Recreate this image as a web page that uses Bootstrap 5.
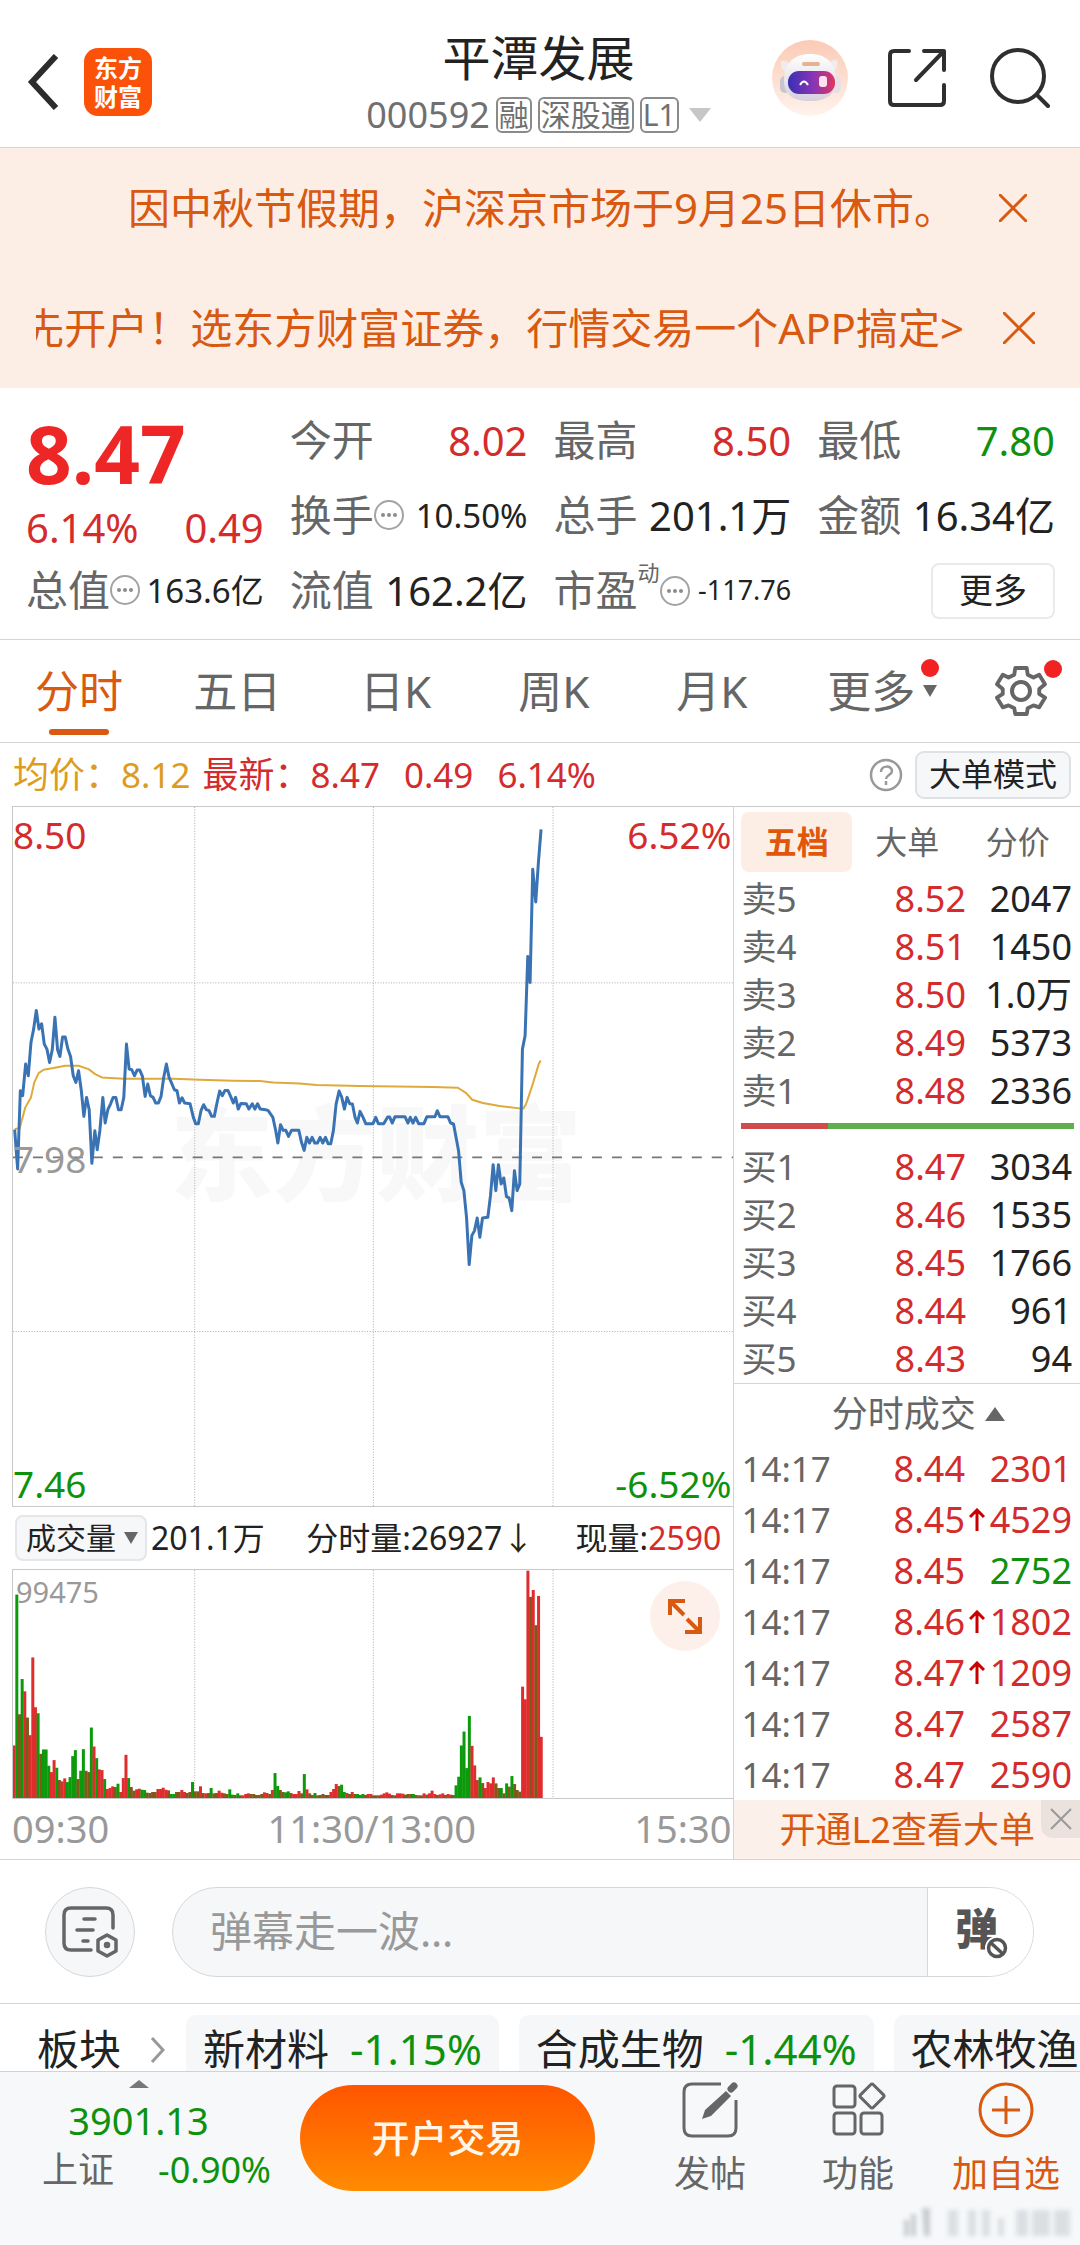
<!DOCTYPE html>
<html lang="zh-CN">
<head>
<meta charset="utf-8">
<meta name="viewport" content="width=device-width, initial-scale=1">
<title>平潭发展 000592</title>
<link href="https://cdn.jsdelivr.net/npm/bootstrap@5.3.0/dist/css/bootstrap.min.css" rel="stylesheet">
<style>
  :root { --up:#d42c2c; --down:#0e920e; --accent:#d8590f; --ink:#222; --sub:#666; --mute:#999; --rule:#d3d6d9; --soft:#f6f7f9; --peach:#fdeee5; }
  body { font-family:"Noto Sans","Noto Sans CJK SC",sans-serif; color:var(--ink); background:#fff; line-height:1.2; font-size:36px; }
  svg { display:block; flex:none; }
  button, .plain-link { border:0; background:none; padding:0; color:inherit; text-decoration:none; }
  .up { color:var(--up); } .down { color:var(--down); } .accent { color:var(--accent); } .sub { color:var(--sub); } .mute { color:var(--mute); }
  .rule-b { border-bottom:1px solid var(--rule); }
  .tri { width:0; height:0; border:7px solid transparent; border-bottom-width:0; border-top:12px solid var(--sub); display:inline-block; flex:none; }
  .tri-up { width:0; height:0; border:10px solid transparent; border-top-width:0; border-bottom:14px solid var(--sub); display:inline-block; }

  .app-head { height:148px; padding:0 30px 0 27px; }
  .head-side { flex:1 1 0; }
  .brand-tile { width:68px; height:68px; margin-left:25px; border-radius:14px; background:#fb5109; color:#fff; font-size:24px; line-height:29px; font-weight:700; }
  .stock-name { font-size:48px; line-height:58px; }
  .stock-code { font-size:36px; line-height:40px; color:#707070; margin-top:8px; gap:6px; }
  .tag { font-size:30px; line-height:32px; border:2px solid #8a8a8a; border-radius:6px; padding:0 1px; }

  .notices { background:var(--peach); font-size:42px; color:var(--accent); }
  .notice-row { height:120px; white-space:nowrap; }
  .notice-clip { flex:none; width:928px; overflow:hidden; }

  .quote { padding:15px 25px 11px 26px; display:grid; grid-template-columns:repeat(4,minmax(0,1fr)); column-gap:26px; }
  .quote-rest { grid-column:span 3; display:grid; grid-template-columns:repeat(3,minmax(0,1fr)); grid-auto-rows:75px; column-gap:26px; }
  .cell { display:flex; align-items:center; justify-content:space-between; height:75px; white-space:nowrap; color:var(--sub); font-size:42px; }
  .cell .v { font-size:40px; color:var(--ink); }
  .cell .v.up { color:var(--up); } .cell .v.down { color:var(--down); }
  .cell .v-mid { font-size:33px; } .cell .v-min { font-size:27px; }
  .last-price { font-size:80px; font-weight:700; line-height:100px; color:#ee2626; }
  .change { font-size:40px; line-height:50px; }
  .dyn { font-size:22px; align-self:flex-start; margin-top:6px; }
  .more-btn { width:124px; height:56px; font-size:34px; color:var(--ink); border:2px solid #e8eaec; border-radius:8px; }

  .periods { height:103px; font-size:44px; color:var(--sub); }
  .period { flex:4 1 0; position:relative; height:100%; }
  .period.on { color:var(--accent); }
  .period.on::after { content:""; position:absolute; bottom:7px; left:50%; width:60px; margin-left:-30px; height:6px; border-radius:3px; background:var(--accent); }
  .period-set { flex:3 1 0; }
  .period-more { padding-left:12px; }
  .dot { position:absolute; width:18px; height:18px; border-radius:50%; background:#f02222; }
  .dot-tri { top:-6px; right:-2px; }
  .dot-gear { top:-5px; right:-15px; }

  .readout { height:63px; padding:0 9px 0 13px; }
  .readout .n { font-size:35px; }
  .big-mode { font-size:32px; width:156px; height:48px; background:var(--soft); border:2px solid #dfe1e5; border-radius:9px; }

  .left-pane { flex:0 0 68%; padding-left:12px; border-right:1px solid var(--rule); }
  .right-pane { flex:1 1 0; min-width:0; border-top:1px solid #c9c9c9; }
  .plot { position:relative; border:1px solid #c9c9c9; border-right:0; height:701px; }
  .plot svg.canvas { width:100%; height:100%; position:relative; }
  .plot-vol { height:230px; }
  .tag-at { position:absolute; font-size:37px; line-height:44px; }
  .tag-top { top:6px; }
  .tag-right { right:2px; }
  .tag-mid { top:330px; }
  .tag-vol { left:3px; top:0; font-size:29px; }
  .wm { position:absolute; left:157px; top:276px; font-size:103px; line-height:140px; font-weight:900; color:#f8f8f8; }
  .vol-bar { height:62px; font-size:32px; white-space:nowrap; padding:0 12px 0 3px; }
  .pick { position:relative; }
  .pick select { appearance:none; width:132px; height:46px; font-size:30px; line-height:40px; padding:0 0 0 9px; background:var(--soft); border:2px solid #e4e6e9; border-radius:8px; color:var(--ink); }
  .pick .tri { position:absolute; right:9px; top:17px; pointer-events:none; }
  .expand { position:absolute; right:13px; top:11px; width:70px; height:70px; border-radius:50%; background:#fdf0ea; color:var(--accent); }
  .axis { font-size:38px; height:59px; padding-right:2px; }

  .book-tabs { padding:5px 7px 3px; font-size:32px; color:var(--sub); }
  .book-tabs button { flex:1 1 0; height:60px; border-radius:8px; }
  .book-tabs .on { background:var(--peach); color:#e0570b; font-weight:700; }
  .ladder { width:100%; font-size:36px; table-layout:fixed; }
  .ladder td { padding:0; height:48px; line-height:44px; text-align:right; }
  .ladder td:first-child { text-align:left; color:var(--sub); font-size:35px; }
  .ladder .qty { width:106px; }
  .ticks td { height:51px; }
  .ticks .arr { width:24px; } .ticks .qty { width:83px; }
  .ticks svg { margin:0 4px 0 auto; }
  .pane-in { padding:0 8px 0 7px; }
  .balance { height:6px; margin:8px 6px 14px 7px; border-radius:0; background:#5fb04c; }
  .balance div { background:#d04c4c; }
  .tape-head { height:60px; border-top:1px solid var(--rule); font-size:36px; gap:9px; padding-left:22px; }
  .promo { position:relative; height:59px; background:#fcf0ea; font-size:36px; }
  .promo-x { position:absolute; right:0; top:0; width:39px; height:38px; background:#ece2dd; border-bottom-left-radius:12px; }

  .danmu { height:145px; padding:0 46px 0 45px; gap:37px; border-top:1px solid var(--rule); }
  .round-btn { width:90px; height:90px; border-radius:50%; background:var(--soft); border:1px solid #d5d8db; flex:none; }
  .say { height:90px; border:1px solid #d5d8db; border-radius:45px; background:var(--soft); overflow:hidden; }
  .say input { border:0; background:none; font-size:42px; padding:0 0 0 37px; min-width:0; outline:0; }
  .say input::placeholder { color:var(--mute); opacity:1; }
  .say-tog { width:106px; background:#fff; border-left:1px solid #d5d8db; color:#555; font-size:43px; font-weight:900; position:relative; padding:0 8px 6px 0; }
  .say-tog svg { position:absolute; left:57px; top:48px; }

  .sectors { height:67px; overflow:hidden; padding:11px 0 0 37px; font-size:42px; line-height:68px; white-space:nowrap; }
  .sector { background:var(--soft); border-radius:10px; height:80px; padding:0 17px; margin-right:20px; gap:21px; flex:none; }
  .chev { margin:22px 21px 0 29px; }

  .dock { background:#f6f8fa; border-top:1px solid #cfd2d6; min-height:177px; padding:8px 0 40px 42px; position:relative; }
  .index-box { width:229px; }
  .index-main { padding-right:36px; }
  .index-num { font-size:38px; line-height:50px; margin-top:7px; }
  .open-btn { flex:0 0 295px; height:106px; border-radius:53px; background:linear-gradient(#ff5500,#ff8c00); color:#fff8ea; font-size:38px; font-weight:500; margin:5px 41px 0 29px; }
  .act { flex:1 1 0; font-size:36px; color:var(--sub); line-height:50px; padding-top:2px; gap:11px; }
  .act-add { color:var(--accent); }
  .stamp { position:absolute; right:4px; bottom:8px; filter:blur(2px); }
</style>
</head>
<body>
<div class="d-flex flex-column">

<header class="app-head d-flex align-items-center rule-b">
  <div class="head-side d-flex align-items-center pt-3">
    <button type="button" aria-label="返回"><svg width="32" height="56" viewBox="0 0 32 56" fill="none" stroke="#2c2c2c" stroke-width="6"><path d="M29 2 5 28l24 26"/></svg></button>
    <div class="brand-tile d-flex flex-column justify-content-center align-items-center"><span>东方</span><span>财富</span></div>
  </div>
  <div class="text-center pt-3">
    <h1 class="stock-name fw-normal mb-0">平潭发展</h1>
    <div class="stock-code d-flex align-items-center"><span>000592</span><span class="tag">融</span><span class="tag">深股通</span><span class="tag">L1</span>
      <svg class="ms-1" width="22" height="14"><path d="M0 0h22L11 14z" fill="#c6c6c6"/></svg></div>
  </div>
  <div class="head-side d-flex align-items-center justify-content-end pt-2" style="gap:40px">
    <button type="button" aria-label="智能助手"><svg width="76" height="76" viewBox="0 0 76 76">
      <defs><linearGradient id="halo" x2="0" y2="1"><stop stop-color="#fbcab5"/><stop offset="1" stop-color="#fff3ec"/></linearGradient>
      <linearGradient id="visor"><stop stop-color="#3a2fb4"/><stop offset=".55" stop-color="#8a35b5"/><stop offset="1" stop-color="#e03560"/></linearGradient>
      <linearGradient id="shell" x2="0" y2="1"><stop stop-color="#fff"/><stop offset="1" stop-color="#d5d0dc"/></linearGradient></defs>
      <circle cx="38" cy="38" r="38" fill="url(#halo)"/>
      <path d="M9 21q7-1 10 5l-6 6q-5-4-4-11zM65 20q-7 0-10 5l7 6q5-4 3-11z" fill="#f1ebee"/>
      <rect x="8" y="36" width="10" height="17" rx="5" fill="#c9c5d0"/><rect x="59" y="36" width="10" height="17" rx="5" fill="#e7dfe6"/>
      <path d="M38 14c17 0 25 10 26 24 1 15-8 23-26 23S11 54 12 38c1-14 9-24 26-24z" fill="url(#shell)"/>
      <rect x="30" y="22" width="18" height="4" rx="2" fill="#e6b48c"/>
      <rect x="16" y="31" width="47" height="23" rx="11" fill="url(#visor)"/>
      <path d="M28 45q4-7 8 0" fill="none" stroke="#fff" stroke-width="2"/><rect x="47" y="36" width="8" height="11" rx="3" fill="#ffe3f0"/></svg></button>
    <button type="button" aria-label="分享"><svg width="58" height="58" viewBox="0 0 58 58" fill="none" stroke="#2f2f2f" stroke-width="4" stroke-linecap="round" stroke-linejoin="round"><path d="M21 2H6q-4 0-4 4v46q0 4 4 4h46q4 0 4-4V36M36 2h20v19M55 3 28 31"/></svg></button>
    <button type="button" aria-label="搜索" class="ms-1"><svg width="60" height="60" viewBox="0 0 60 60" fill="none" stroke="#2f2f2f" stroke-width="4" stroke-linecap="round"><circle cx="28" cy="28" r="26"/><path d="M47 47l11 11"/></svg></button>
  </div>
</header>

<section class="notices">
  <div class="notice-row d-flex align-items-center justify-content-between" style="padding:0 53px 0 128px">
    <span>因中秋节假期，沪深京市场于9月25日休市。</span>
    <button type="button" aria-label="关闭公告"><svg width="28" height="28" viewBox="0 0 28 28" stroke="currentColor" stroke-width="3"><path d="M0 0l28 28M28 0 0 28"/></svg></button>
  </div>
  <div class="notice-row d-flex align-items-center justify-content-between" style="padding:0 45px 0 36px">
    <a href="#" class="plain-link notice-clip d-flex justify-content-end"><span>先开户！选东方财富证券，行情交易一个APP搞定&gt;</span></a>
    <button type="button" aria-label="关闭广告"><svg width="32" height="32" viewBox="0 0 32 32" stroke="currentColor" stroke-width="3"><path d="M0 0l32 32M32 0 0 32"/></svg></button>
  </div>
</section>

<section class="quote rule-b">
  <div>
    <div class="last-price">8.47</div>
    <div class="change up d-flex justify-content-between"><span>6.14%</span><span>0.49</span></div>
    <div class="cell"><span class="d-flex align-items-center">总值<svg width="30" height="30"><use href="#dots"/></svg></span><span class="v v-mid">163.6亿</span></div>
  </div>
  <div class="quote-rest">
    <div class="cell"><span>今开</span><span class="v up">8.02</span></div>
    <div class="cell"><span>最高</span><span class="v up">8.50</span></div>
    <div class="cell"><span>最低</span><span class="v down">7.80</span></div>
    <div class="cell"><span class="d-flex align-items-center">换手<svg width="30" height="30"><use href="#dots"/></svg></span><span class="v v-mid">10.50%</span></div>
    <div class="cell"><span>总手</span><span class="v">201.1万</span></div>
    <div class="cell"><span>金额</span><span class="v">16.34亿</span></div>
    <div class="cell"><span>流值</span><span class="v">162.2亿</span></div>
    <div class="cell"><span>市盈</span><span class="dyn">动</span><svg width="30" height="30"><use href="#dots"/></svg><span class="v v-min ms-auto">-117.76</span></div>
    <div class="cell justify-content-end"><button type="button" class="more-btn">更多</button></div>
  </div>
</section>
<svg width="0" height="0" class="position-absolute"><symbol id="dots" viewBox="0 0 30 30"><circle cx="15" cy="15" r="14" fill="none" stroke="#a3a3a3" stroke-width="2"/><g fill="#8c8c8c"><circle cx="9" cy="15" r="2"/><circle cx="15" cy="15" r="2"/><circle cx="21" cy="15" r="2"/></g></symbol></svg>

<nav class="periods d-flex align-items-center rule-b">
  <button type="button" class="period on">分时</button>
  <button type="button" class="period">五日</button>
  <button type="button" class="period">日K</button>
  <button type="button" class="period">周K</button>
  <button type="button" class="period">月K</button>
  <button type="button" class="period period-more"><span class="d-inline-flex align-items-center position-relative">更多<span class="tri ms-2"></span><span class="dot dot-tri"></span></span></button>
  <button type="button" class="period-set d-flex justify-content-center" aria-label="设置"><span class="position-relative"><svg width="52" height="52" viewBox="-26 -26 52 52" fill="none" stroke="#666" stroke-width="4" stroke-linejoin="round"><path d="M-6-24H6L7-17 13-14 19-17 25-7 19-2V3L25 7 19 17 13 15 7 18 6 24H-6L-7 18-13 15-19 17-25 7-19 3V-2L-25-7-19-17-13-14-7-17z" transform="scale(.96)"/><circle r="9"/></svg><span class="dot dot-gear"></span></span></button>
</nav>

<section class="readout d-flex align-items-center">
  <span style="color:#dd9c1c">均价：<span class="n">8.12</span></span>
  <span class="up d-flex align-items-center ms-2 ps-1" style="gap:24px"><span>最新：<span class="n">8.47</span></span><span class="n">0.49</span><span class="n">6.14%</span></span>
  <svg class="ms-auto me-2" width="34" height="34" viewBox="0 0 34 34" fill="none" stroke="#999" stroke-width="2.500"><circle cx="17" cy="17" r="15"/><path d="M12 14c0-7 11-7 11-1 0 4-6 4-6 8M17 23v4"/></svg>
  <button type="button" class="big-mode ms-1">大单模式</button>
</section>

<main class="d-flex">
  <div class="left-pane">
    <div class="plot">
      <div class="wm">东方财富</div>
      <svg class="canvas" viewBox="38 13 2165 2099" preserveAspectRatio="none" fill="none">
        <g stroke="#adadad" stroke-width="3" stroke-dasharray="3 5"><path d="M584 13V2112M1121 13V2112M1661 13V2112M38 541H2203M38 1588H2203"/></g>
        <path d="M38 1065H2203" stroke="#777" stroke-width="5" stroke-dasharray="30 30"/>
        <polyline stroke="#dfa93c" stroke-width="6" stroke-linejoin="round" points="43,980 58,978 75,915 92,885 102,840 115,812 130,802 160,797 195,790 235,790 265,800 285,815 305,825 370,829 520,829 600,832 700,835 780,836 820,840 900,843 950,848 1080,851 1190,852 1300,854 1375,856 1400,872 1418,892 1450,902 1500,911 1560,918 1572,918 1580,905 1600,845 1618,785 1624,774"/>
        <polyline stroke="#3a73b4" stroke-width="9" stroke-linejoin="round" points="43,982 52,1100 60,865 67,880 76,785 84,820 92,720 100,680 108,624 116,680 124,664 132,725 140,740 148,780 156,742 164,644 172,742 179,762 187,704 195,704 203,740 211,762 219,820 227,840 235,805 243,862 251,942 259,885 267,922 275,1083 284,985 291,1042 299,985 308,885 315,962 323,922 331,905 339,885 347,885 355,922 363,922 371,885 379,725 387,800 395,802 403,820 411,803 419,803 427,822 435,882 443,845 451,880 459,885 467,902 475,902 483,882 491,825 499,785 507,825 515,843 523,862 531,865 538,902 546,886 554,902 570,904 580,945 587,964 595,964 603,925 611,907 619,922 627,925 635,942 643,942 651,902 659,866 667,880 675,864 684,864 692,882 700,902 707,885 715,920 723,903 739,904 747,920 757,904 765,920 773,904 781,920 797,922 805,925 819,945 827,982 834,1022 842,967 850,984 858,984 866,1002 875,984 897,984 905,1020 913,1044 921,1005 929,1022 937,1005 945,1022 953,1022 961,1005 969,1022 977,1005 985,1024 993,1024 1001,984 1009,905 1018,866 1026,885 1034,920 1042,885 1050,904 1058,905 1066,945 1073,962 1081,927 1090,945 1098,964 1120,964 1128,945 1136,964 1152,964 1164,944 1170,944 1178,962 1186,943 1216,943 1225,962 1232,945 1240,962 1248,945 1257,964 1273,964 1282,943 1306,943 1313,925 1321,943 1345,943 1353,962 1362,965 1377,1045 1385,1140 1393,1165 1401,1245 1409,1387 1417,1300 1425,1285 1433,1247 1441,1305 1449,1247 1465,1245 1473,1180 1481,1087 1489,1165 1497,1087 1505,1145 1513,1127 1521,1183 1529,1187 1537,1225 1545,1105 1553,1165 1561,1145 1569,740 1577,700 1585,462 1592,540 1600,200 1609,298 1617,180 1625,80"/>
      </svg>
      <span class="tag-at tag-top up start-0">8.50</span>
      <span class="tag-at tag-top tag-right up">6.52%</span>
      <span class="tag-at tag-mid mute start-0">7.98</span>
      <span class="tag-at down start-0 bottom-0">7.46</span>
      <span class="tag-at tag-right down bottom-0">-6.52%</span>
    </div>
    <div class="vol-bar d-flex align-items-center">
      <label class="pick"><select aria-label="指标"><option>成交量</option></select><span class="tri"></span></label>
      <span class="ms-1">201.1万</span>
      <span class="mx-auto">分时量:26927↓</span>
      <span>现量:<span class="up">2590</span></span>
    </div>
    <div class="plot plot-vol">
      <svg class="canvas" viewBox="38 262 2165 686" preserveAspectRatio="none">
        <path d="M584 262V948M1121 262V948M1661 262V948" stroke="#adadad" stroke-width="3" stroke-dasharray="3 5"/>
        <g id="bars"></g>
      </svg>
      <span class="tag-at tag-vol mute">99475</span>
      <button type="button" class="expand d-flex justify-content-center align-items-center" aria-label="放大"><svg width="36" height="36" viewBox="0 0 36 36" fill="none" stroke="currentColor" stroke-width="4"><path d="M3 17V3h15M3 3l14 14M33 19v15H18M33 34 20 21"/></svg></button>
    </div>
    <div class="axis mute d-flex justify-content-between align-items-center"><span>09:30</span><span>11:30/13:00</span><span>15:30</span></div>
  </div>

  <div class="right-pane">
    <div class="book-tabs d-flex"><button type="button" class="on">五档</button><button type="button">大单</button><button type="button">分价</button></div>
    <div class="pane-in"><table class="ladder"><tbody>
      <tr><td>卖5</td><td class="up">8.52</td><td class="qty">2047</td></tr>
      <tr><td>卖4</td><td class="up">8.51</td><td class="qty">1450</td></tr>
      <tr><td>卖3</td><td class="up">8.50</td><td class="qty">1.0万</td></tr>
      <tr><td>卖2</td><td class="up">8.49</td><td class="qty">5373</td></tr>
      <tr><td>卖1</td><td class="up">8.48</td><td class="qty">2336</td></tr>
    </tbody></table></div>
    <div class="balance progress"><div style="width:26%"></div></div>
    <div class="pane-in"><table class="ladder"><tbody>
      <tr><td>买1</td><td class="up">8.47</td><td class="qty">3034</td></tr>
      <tr><td>买2</td><td class="up">8.46</td><td class="qty">1535</td></tr>
      <tr><td>买3</td><td class="up">8.45</td><td class="qty">1766</td></tr>
      <tr><td>买4</td><td class="up">8.44</td><td class="qty">961</td></tr>
      <tr><td>买5</td><td class="up">8.43</td><td class="qty">94</td></tr>
    </tbody></table></div>
    <div class="tape-head sub d-flex align-items-center justify-content-center"><span>分时成交</span><span class="tri-up"></span></div>
    <div class="pane-in"><table class="ladder ticks"><tbody id="tape"></tbody></table></div>
    <div class="promo accent d-flex align-items-center justify-content-center"><a href="#" class="plain-link">开通L2查看大单</a>
      <button type="button" class="promo-x d-flex align-items-center justify-content-center" aria-label="关闭"><svg width="22" height="22" viewBox="0 0 22 22" stroke="#999" stroke-width="2"><path d="M1 1l20 20M21 1 1 21"/></svg></button></div>
  </div>
</main>

<section class="danmu d-flex align-items-center rule-b">
  <button type="button" class="round-btn d-flex align-items-center justify-content-center" aria-label="弹幕设置"><svg width="56" height="52" viewBox="0 0 56 52" fill="none" stroke="#666" stroke-width="3.500" stroke-linecap="round"><path d="M51 22V9q0-7-7-7H9Q2 2 2 9v28q0 7 7 7h20M22 13h11M15 24h16M21 35h5"/><path d="M45 29l9 5v11l-9 5-9-5V34z" stroke-linejoin="round"/><circle cx="45" cy="39" r="1.500"/></svg></button>
  <div class="say d-flex flex-fill"><input class="flex-fill" type="text" placeholder="弹幕走一波…" aria-label="弹幕"><button type="button" class="say-tog" aria-label="关闭弹幕">弹<svg width="24" height="24" viewBox="0 0 24 24"><circle cx="12" cy="12" r="8.500" fill="#fff" stroke="#fff" stroke-width="7"/><circle cx="12" cy="12" r="8.500" fill="none" stroke="#555" stroke-width="3.500"/><path d="M6 7l12 11" stroke="#555" stroke-width="3.500"/></svg></button></div>
</section>

<section class="sectors d-flex">
  <span>板块</span>
  <svg class="chev" width="15" height="26" viewBox="0 0 15 26" fill="none" stroke="#999" stroke-width="3"><path d="M2 1l11 12L2 25"/></svg>
  <a href="#" class="plain-link sector d-flex"><span>新材料</span><span class="down">-1.15%</span></a>
  <a href="#" class="plain-link sector d-flex"><span>合成生物</span><span class="down">-1.44%</span></a>
  <a href="#" class="plain-link sector d-flex"><span>农林牧渔</span></a>
</section>

<footer class="dock d-flex align-items-start">
  <div class="index-box">
    <div class="index-main text-center">
      <svg class="mx-auto" width="20" height="8"><path d="M0 8h20L10 0z" fill="#777"/></svg>
      <div class="down index-num">3901.13</div>
    </div>
    <div class="d-flex justify-content-between align-items-center" style="line-height:50px"><span class="sub">上证</span><span class="down">-0.90%</span></div>
  </div>
  <button type="button" class="open-btn">开户交易</button>
  <button type="button" class="act d-flex flex-column align-items-center"><svg width="56" height="56" viewBox="0 0 56 56" fill="none" stroke="#666" stroke-width="3"><path d="M39 2H10Q2 2 2 10v36q0 8 8 8h36q8 0 8-8V18"/><path d="M20 37l3-9L44 9l5 5-20 20z" fill="#666" stroke="none"/><path d="M49 7l3-3" stroke-width="7" stroke-linecap="round"/></svg><span>发帖</span></button>
  <button type="button" class="act d-flex flex-column align-items-center"><svg width="56" height="56" viewBox="0 0 56 56" fill="none" stroke="#666" stroke-width="3" stroke-linejoin="round"><rect x="4" y="4" width="21" height="21" rx="3"/><rect x="4" y="31" width="21" height="21" rx="3"/><rect x="31" y="31" width="21" height="21" rx="3"/><rect x="33" y="5" width="18" height="18" rx="2" transform="rotate(45 42 14)"/></svg><span>功能</span></button>
  <button type="button" class="act act-add d-flex flex-column align-items-center"><svg width="56" height="56" viewBox="0 0 56 56" fill="none" stroke="currentColor" stroke-width="3"><circle cx="28" cy="28" r="26"/><path d="M28 14v28M14 28h28"/></svg><span>加自选</span></button>
  <svg class="stamp" width="176" height="36" viewBox="0 0 176 36" fill="#c9ccd1"><path d="M4 16h5v16H4zM11 10h5v22h-5zM22 4h8v28h-6z"/><g fill="#dcdfe2"><path d="M48 6h10v26H48zM68 6h8v26h-8zM82 6h8v26h-8zM98 14h6v18h-6zM116 6h12v26h-12zM132 6h18v26h-18zM154 6h16v26h-16z"/></g></svg>
</footer>
</div>

<script src="https://cdn.jsdelivr.net/npm/bootstrap@5.3.0/dist/js/bootstrap.bundle.min.js"></script>
<script>
  // minute volume: colour code (r rise, g fall, b mixed) followed by bar height
  const vol = "r158 g612 b252 g358 r321 b242 r189 r423 r273 g255 b133 g146 g146 g97 r78 r114 g91 b54 r50 r59 g48 g63 g126 g144 b57 g82 g147 b82 b78 g212 r155 g120 r86 r84 g57 r27 r30 r35 b33 g43 r18 r60 r130 g60 b33 b22 r26 r28 g25 g24 b16 b15 b18 b18 r27 r27 r31 r25 b23 g12 g12 b18 b18 r24 r18 b15 b18 g48 b20 b20 r35 b15 r14 b15 g30 b14 b15 r22 r16 b14 b12 g26 g10 b9 g14 b8 r8 r12 r14 b12 b12 b9 b9 b12 r17 r15 b12 r24 g75 g36 b24 b18 g17 g20 b15 r12 r12 r21 b14 g72 r26 b14 b9 g15 b8 b9 b12 b9 b9 r18 r27 r42 b36 g40 g18 r15 b12 r18 b12 g12 g9 g12 b9 r12 r12 b8 b8 b8 r10 r14 r17 r13 b9 b8 r14 r14 r13 b10 b12 b12 g12 b9 b8 b8 r14 b10 r14 r22 r12 b9 r11 r14 b9 r12 b10 b9 g38 g64 g158 g200 g90 g247 r157 r98 r54 g62 b45 r30 r48 r44 r62 b44 b30 g30 b14 g44 b34 g66 b42 b24 b19 r335 r297 r684 b605 r626 b520 r608 r184".split(" ");
  const fill = { r:"#e02c2c", g:"#0c9a0c", b:"#80591a" };
  document.getElementById("bars").innerHTML = vol.map((s, i) => {
    const h = +s.slice(1);
    return `<rect x="${37 + i * 8}" y="${948 - h}" width="9" height="${h}" fill="${fill[s[0]]}"/>`;
  }).join("");
  const arrow = '<svg width="16" height="24" viewBox="0 0 16 24" fill="none" stroke="#c80000" stroke-width="3"><path d="M8 23V2M1 9l7-7 7 7"/></svg>';
  const deals = [["8.44",0,2301],["8.45",1,4529],["8.45",0,2752,"down"],["8.46",1,1802],["8.47",1,1209],["8.47",0,2587],["8.47",0,2590]];
  document.getElementById("tape").innerHTML = deals.map(d =>
    `<tr><td>14:17</td><td class="up">${d[0]}</td><td class="arr">${d[1] ? arrow : ""}</td><td class="qty ${d[3] || "up"}">${d[2]}</td></tr>`).join("");
</script>
</body>
</html>
